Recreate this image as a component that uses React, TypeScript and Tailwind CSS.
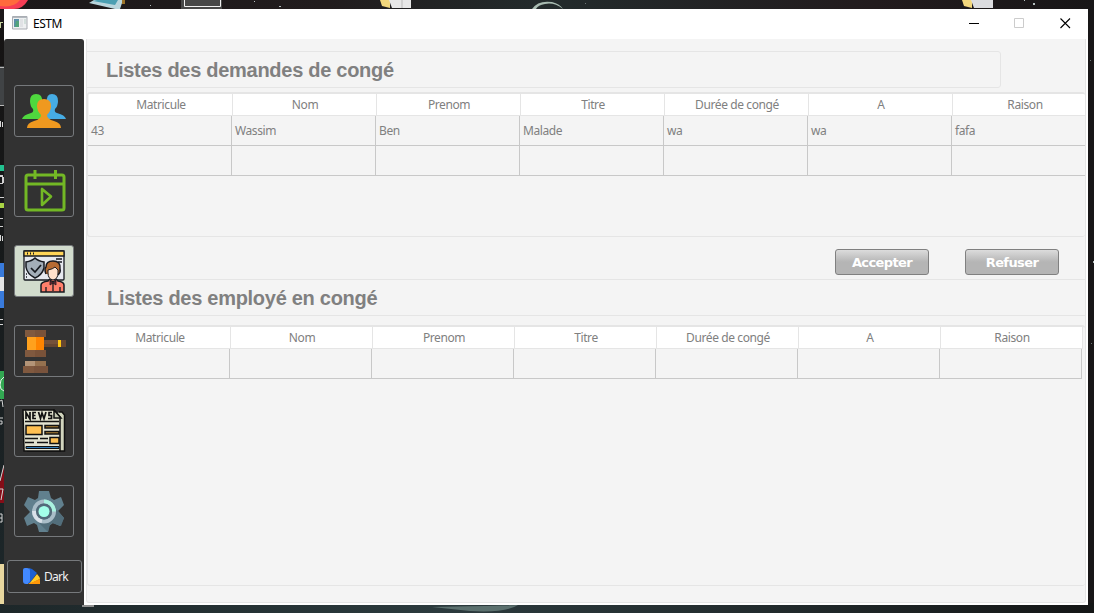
import React from "react";

const columns = ["Matricule", "Nom", "Prenom", "Titre", "Durée de congé", "A", "Raison"];
const requests = [
  ["43", "Wassim", "Ben", "Malade", "wa", "wa", "fafa"],
  ["", "", "", "", "", "", ""],
];

function Wallpaper() {
  return (
    <svg className="absolute inset-0" width="1094" height="613" viewBox="0 0 1094 613">
      <defs>
        <linearGradient id="sky" x1="0" x2="1" y1="0" y2="0">
          <stop offset="0" stopColor="#1c1819" />
          <stop offset=".3" stopColor="#211c1d" />
          <stop offset=".5" stopColor="#232b2c" />
          <stop offset=".8" stopColor="#221b1d" />
          <stop offset="1" stopColor="#181617" />
        </linearGradient>
        <linearGradient id="side" x1="0" x2="0" y1="0" y2="1">
          <stop offset="0" stopColor="#151313" />
          <stop offset=".4" stopColor="#171a1b" />
          <stop offset="1" stopColor="#1d282b" />
        </linearGradient>
        <linearGradient id="ground" x1="0" x2="1" y1="0" y2="0">
          <stop offset="0" stopColor="#1d2729" />
          <stop offset=".4" stopColor="#2b3a3d" />
          <stop offset=".7" stopColor="#222b2d" />
          <stop offset="1" stopColor="#141616" />
        </linearGradient>
      </defs>
      <rect width="1094" height="613" fill="url(#sky)" />
      <rect y="30" width="4" height="583" fill="url(#side)" />
      <rect y="603" width="1094" height="10" fill="url(#ground)" />
      <path d="M0 0H28Q23 9 14 9H0Z" fill="#f63d55" />
      <path d="M0 0H20Q14 8 0 6Z" fill="#ff6a3c" />
      <path d="M94 0H123L120 9H115L89 3Z" fill="#b9d5dc" />
      <path d="M97 0H118L115 5L93 1Z" fill="#4b9fb2" />
      <path d="M122 0h3v4h-3z" fill="#9c7328" />
      <path d="M181 0h41v9h-41z" fill="#484848" />
      <path d="M184.500 0V6.500H220.500V0" fill="none" stroke="#f0f0f0" />
      <path d="M380 0h10v8l-8-2z" fill="#f3d77c" />
      <path d="M389 0h22v8h-19z" fill="#e7e7e7" />
      <path d="M402 0v8" stroke="#b9b9b9" />
      <path d="M962 0h10v8l-8-2z" fill="#f3d77c" />
      <path d="M971 0h22v8h-19z" fill="#dcdcdf" />
      <path d="M532 9Q538 0 552 2Q560 4 563 9Q554 2 545 4Q538 5 536 9Z" fill="#a9bcb2" />
      <path d="M432 607Q490 606 518 605Q506 613 470 611Z" fill="#5b706e" />
      <path d="M82 605h12v2H82z" fill="#909090" />
      <path
        d="M254 1h1v1h-1zM279 6h2v1h-2zM150 5h1v1h-1zM1033 3h2v2h-2zM1024 0h1v1h-1zM1093 261h1v2h-1z"
        fill="#b5bebe"
      />
      <path d="M585 3h1v1h-1zM1090 60h1v1h-1zM1091 343h1v1h-1z" fill="#6c7474" />
      <path d="M0 22h1v6H0zM1 22h2v1H1z" fill="#c8d4a0" />
      <path d="M0 66h4v40H0z" fill="#404345" />
      <path d="M0 67h4v1H0zM0 105h4v1H0z" fill="#b9b9b9" />
      <path d="M0 121h1v6H0zM2 122h1v5H2zM0 235h1v6H0zM2 236h1v5H2zM0 319h3v1H0zM0 324h3v1H0z" fill="#d6d6d6" />
      <path d="M0 165h4v6H0z" fill="#22c18f" />
      <path d="M0 175h3v2H0zM2 177h2v6H2zM0 183h3v1H0zM0 197h4v1H0zM0 218h3v1H0zM0 226h3v1H0z" fill="#d0d0d0" />
      <path d="M0 203h4v5H0z" fill="#a9d345" />
      <path d="M0 263h4v45H0z" fill="#397bdc" />
      <path d="M0 277h4v14H0z" fill="#e5e5e5" />
      <path d="M0 371h4v28H0z" fill="#32a852" />
      <path d="M4 377Q0 379 0 385Q0 390 4 391" fill="none" stroke="#e5efe7" />
      <path d="M0 401L2 400L3 407M0 418h3M0 421h2v3H0" fill="none" stroke="#d6d6d6" />
      <path d="M4 465v38H0v-21z" fill="#850d17" />
      <path d="M4 465L0 481M0 489H3L1 500M0 514H2V522H0M0 518H2" fill="none" stroke="#d6d6d6" />
      <path d="M0 564h4v40H0z" fill="#e8d79f" />
    </svg>
  );
}

function TitleBar() {
  return (
    <header className="flex h-[30px] shrink-0 items-center bg-white pl-2">
      <svg className="-mt-0.5" width="16" height="14" viewBox="0 0 16 14">
        <path d="M.5.5h14.500v12.500H.5z" fill="#eef0f1" stroke="#a9adb3" />
        <path d="M1 1.500h14" stroke="#b3b8be" />
        <path d="M2 3h5v8H2z" fill="#5b8fa8" />
        <path d="M4 5h3v6H3z" fill="#52a37b" />
        <path d="M8 3h3v8H8z" fill="#e0e2e5" />
        <path d="M12 3h2v5h-2z" fill="#d2dfdb" />
      </svg>
      <span className="ml-[5px] font-['Noto_Sans',sans-serif] text-[12px] tracking-[-0.5px] text-black">ESTM</span>
      <div className="-mt-0.5 ml-auto flex">
        <div className="flex w-[44px] justify-center">
          <svg width="11" height="11" viewBox="0 0 11 11"><path d="M0 5.500h10" stroke="#000" /></svg>
        </div>
        <div className="flex w-[46px] justify-center">
          <svg width="11" height="11" viewBox="0 0 11 11"><path d="M.5.5h9v9h-9z" fill="none" stroke="#ccc" /></svg>
        </div>
        <div className="flex w-[46px] justify-center">
          <svg width="11" height="11" viewBox="0 0 11 11"><path d="M.5.5l9.500 9.500M10 .5L.5 10" stroke="#000" strokeWidth="1.100" /></svg>
        </div>
      </div>
    </header>
  );
}

function PeopleIcon() {
  return (
    <svg width="44" height="35" viewBox="0 0 44 35">
      <path d="M0 25Q1 21 9 19Q12 18 11 15Q8 12 8 7Q8 0 14 0Q21 0 20 8Q20 13 17 16Q17 19 23 21V25Z" fill="#4fd83e" />
      <path d="M44 25Q43 21 35 19Q32 18 33 15Q36 12 36 7Q36 0 30 0Q24 0 25 8Q25 13 27 16Q27 19 21 21V25Z" fill="#46ace4" />
      <path d="M5 34Q5 29 12 27Q19 25 19 21Q15 17 15 12Q15 5 22 5Q29 5 29 12Q29 17 25 21Q25 25 32 27Q39 29 39 34Z" fill="#ef991f" />
    </svg>
  );
}

function CalendarIcon() {
  return (
    <svg className="ml-px" width="42" height="42" viewBox="0 0 42 42" fill="none" stroke="#73b825" strokeWidth="3">
      <rect x="2" y="5" width="38" height="35" rx="2" />
      <path d="M2 14H40M11 0V9M31.500 0V9" />
      <path d="M18 19V35L27 26.500Z" strokeWidth="2.600" strokeLinejoin="round" />
    </svg>
  );
}

function ManagerIcon() {
  return (
    <svg className="ml-px" width="43" height="43" viewBox="0 0 43 43" stroke="#171a20" strokeWidth="1.300">
      <rect x="1" y="1" width="40" height="29" rx="1" fill="#e6e9ef" />
      <path d="M1 1H41V6H1Z" fill="#ffd557" />
      <path d="M4 3.500h1M7 3.500h1M10 3.500h1" strokeWidth="2" />
      <path d="M33 9h6M35 12h4M3 27h1M3 24h1" />
      <path d="M3 12Q9 11 12 8Q15 11 21 12V18Q19 25 12 28Q4 24 3 17Z" fill="#a3aeb9" strokeWidth="1.500" />
      <path d="M8 18l4 4 6-7" fill="none" strokeWidth="1.700" />
      <path d="M18 42V35Q18 32 25 31L27 29H33L35 31Q41 32 41 35V42Z" fill="#ff806b" strokeWidth="1.500" />
      <path d="M23 24Q21 19 23 17Q23 11 30 11Q38 11 37 19Q38 22 35 25" fill="#b66b33" strokeWidth="1.500" />
      <path d="M25 20Q30 19 32 17L35 20V23Q35 29 30 30Q25 29 25 23Z" fill="#ffe1cb" strokeWidth="1" />
      <path d="M27 30l3 2 3-2M30 33V41M23 37v5M37 37v5" fill="none" />
      <path d="M27 31L30 33L33 31V35L30 33L27 35Z" fill="#7b2630" strokeWidth=".8" />
    </svg>
  );
}

function GavelIcon() {
  return (
    <svg width="43" height="43" viewBox="0 0 43 43">
      <path d="M2 0H23V27H2Z" fill="#795239" />
      <path d="M2 0H12V27H2Z" fill="#80593f" />
      <path d="M4 7H13V20H4Z" fill="#ffa11d" />
      <path d="M13 7H21V20H13Z" fill="#ff8400" />
      <path d="M2 7H4V20H2ZM21 7H23V20H21Z" fill="#323232" />
      <path d="M21 10H43V17H21Z" fill="#654632" />
      <path d="M21 10H35V14H21Z" fill="#74513a" />
      <path d="M35 10H38V17H35Z" fill="#fec510" />
      <path d="M2 31H23V36H2Z" fill="#b39477" />
      <path d="M12 31H23V36H12Z" fill="#95714f" />
      <path d="M0 36H25V43H0Z" fill="#79533c" />
      <path d="M0 36H11V43H0Z" fill="#80593f" />
    </svg>
  );
}

function NewsIcon() {
  return (
    <svg width="44" height="44" viewBox="0 0 44 44" stroke="#111" strokeWidth="1.500">
      <path d="M37 3H40L42.500 6V42H5" fill="#d1d4bd" />
      <path d="M1 1H32L38 8V42H2Z" fill="#e3e3d0" />
      <path d="M32 1V9H39Z" fill="#c4c8b2" />
      <path
        d="M4 10V3.500L8 10V3M14 3.500H11V9.500H14M11 6.500H13.500M16.500 3L18.500 9.500L20 4L22 9.500L24 3M30 3.500H27V6.500H29.500V9.500H26"
        fill="none"
        strokeWidth="1.700"
      />
      <path d="M3 12.500H37" />
      <path d="M4 16.500H20V25.500H4ZM28 28.500H37V34.500H28Z" fill="#ffc052" />
      <path d="M23 16.500H37V19H23ZM23 22.500H37V25H23Z" fill="#b28439" />
      <path d="M3 29.500H16M3 33.500H12M18 29.500H26M15 33.500H26" />
      <path d="M4 37.500H37V39.500H4Z" fill="#3580bd" strokeWidth="1" />
    </svg>
  );
}

function GearIcon() {
  return (
    <svg width="40" height="41" viewBox="0 0 40 41">
      <path d="M15 0H25L27 7L30 9L37 6L40 14L34 20L40 27L36 35L29 32L25 35L24 41H15L13 34L10 32L3 35L0 27L6 21L0 14L4 6L11 9L14 7Z" fill="#61808e" />
      <path d="M28 32L37 35L40 27L34 20L28 15L14 31L24 41L26 34Z" fill="#526e7b" />
      <circle cx="20" cy="20.500" r="10" fill="none" stroke="#a9bdc8" strokeWidth="4" />
      <path d="M20 10.500A10 10 0 0 1 30 20.500" fill="none" stroke="#a8f2df" strokeWidth="4" />
      <path d="M18 30A10 10 0 0 1 10 20" fill="none" stroke="#d9e1e9" strokeWidth="4" />
      <circle cx="20" cy="20.500" r="8" fill="#526a79" />
      <circle cx="20" cy="20.500" r="5.500" fill="#a3ffe9" />
    </svg>
  );
}

function PaletteIcon() {
  return (
    <svg width="17" height="17" viewBox="0 0 17 17">
      <path d="M6 0L9 1L14 5L6 16Z" fill="#1b60d3" />
      <path d="M0 2Q0 0 2 0H4Q7 0 7 3V13L5 16H3Q0 16 0 13Z" fill="#4289ff" />
      <path d="M6 16L14 6Q17 9 17 11L7 16Z" fill="#ffca28" />
      <path d="M5 16L17 11V16Z" fill="#ff9708" />
    </svg>
  );
}

function NavButton({ children, active = false }: { children: React.ReactNode; active?: boolean }) {
  return (
    <button
      className={
        "mb-7 flex h-[52px] w-[60px] shrink-0 items-center justify-center rounded-[3px] border border-[#76797c] " +
        (active ? "bg-[#d2dccd]" : "bg-[#323232]")
      }
    >
      {children}
    </button>
  );
}

function Sidebar() {
  return (
    <nav className="flex w-20 shrink-0 flex-col items-center rounded-t-[3px] bg-[#323232] pt-[46px]">
      <NavButton><PeopleIcon /></NavButton>
      <NavButton><CalendarIcon /></NavButton>
      <NavButton active><ManagerIcon /></NavButton>
      <NavButton><GavelIcon /></NavButton>
      <NavButton><NewsIcon /></NavButton>
      <NavButton><GearIcon /></NavButton>
      <button className="-mt-[5px] ml-px flex h-[33px] w-[75px] shrink-0 items-center rounded-[3px] border border-[#76797c] pl-[15px] font-['Noto_Sans',sans-serif] text-[12px] tracking-[-0.7px] text-[#f0f0f0]">
        <PaletteIcon />
        <span className="ml-1">Dark</span>
      </button>
    </nav>
  );
}

const cellText = "font-['Noto_Sans',sans-serif] text-[12px] tracking-[-0.4px] text-[#808080]";

function HeaderRow({ cell }: { cell: string }) {
  return (
    <div className="ml-px flex h-[22px] w-max border-b border-[#e5e5e5] bg-white">
      {columns.map((name) => (
        <div key={name} className={`flex shrink-0 items-center justify-center border-r border-[#e5e5e5] pl-px ${cellText} ${cell}`}>
          {name}
        </div>
      ))}
    </div>
  );
}

function BodyRow({ values, cell }: { values: string[]; cell: string }) {
  return (
    <div className="flex h-[30px] w-max">
      {values.map((value, i) => (
        <div key={i} className={`flex shrink-0 items-center border-r border-b border-[#c8c8c8] pl-[3px] ${cellText} ${cell}`}>
          {value}
        </div>
      ))}
    </div>
  );
}

function ActionButton({ label }: { label: string }) {
  return (
    <button className="flex h-[26px] w-[94px] items-center justify-center rounded-[3px] border border-[#808080] bg-linear-to-b from-[#dcdcdc] via-[#b5b5b5] to-[#b5b5b5] pt-0.5 font-['DejaVu_Sans',sans-serif] text-[13px] font-bold tracking-[-0.6px] text-white">
      {label}
    </button>
  );
}

export default function App() {
  return (
    <div className="relative h-[613px] w-[1094px] overflow-hidden bg-[#1c1a1b] pt-[9px] pl-1">
      <Wallpaper />
      <div className="relative flex h-[596px] w-[1084px] flex-col bg-white">
        <TitleBar />
        <div className="flex min-h-0 flex-1">
          <Sidebar />
          <main className="ml-0.5 flex h-[564px] w-[1000px] flex-col overflow-hidden rounded-b-[3px] border-x border-b border-[#e5e5e5] bg-[#f4f4f4] pt-3">
            <h1 className="-ml-px flex h-[37px] w-[915px] shrink-0 items-center rounded-r-[3px] border border-[#e5e5e5] pl-[19px] font-['Liberation_Sans',sans-serif] text-[20px] font-bold tracking-[-0.28px] text-[#808080]">
              Listes des demandes de congé
            </h1>
            <section className="mt-1 h-[145px] shrink-0 overflow-hidden rounded-[3px] border-t-2 border-b border-l border-[#e5e5e5]">
              <HeaderRow cell="w-[144px]" />
              {requests.map((row, i) => (
                <BodyRow key={i} values={row} cell="w-[144px]" />
              ))}
            </section>
            <div className="flex h-[42px] shrink-0 items-center justify-end gap-9 pt-2 pr-[26px]">
              <ActionButton label="Accepter" />
              <ActionButton label="Refuser" />
            </div>
            <h2 className="flex h-[37px] shrink-0 items-center border-y border-[#e5e5e5] pl-5 font-['Liberation_Sans',sans-serif] text-[20px] font-bold tracking-[-0.28px] text-[#808080]">
              Listes des employé en congé
            </h2>
            <section className="mt-[9px] h-[261px] shrink-0 overflow-hidden rounded-[3px] border-t-2 border-b border-l border-[#e5e5e5]">
              <HeaderRow cell="w-[142px]" />
              <BodyRow values={["", "", "", "", "", "", ""]} cell="w-[142px]" />
            </section>
          </main>
        </div>
      </div>
    </div>
  );
}
